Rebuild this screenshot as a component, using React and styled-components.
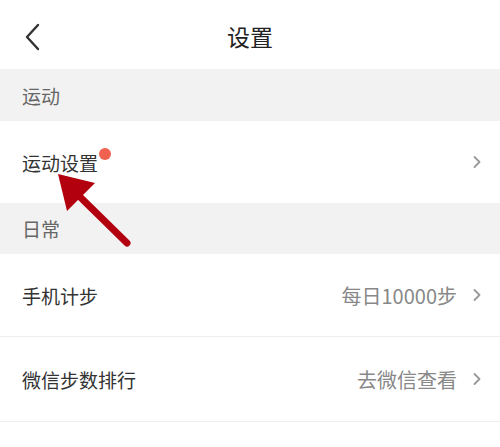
import React from "react";
import styled, { createGlobalStyle } from "styled-components";

const Global = createGlobalStyle`
  html, body { margin: 0; padding: 0; background: #fff; }
  body { font-family: "Noto Sans CJK SC", "Noto Sans", sans-serif; }
`;

const Page = styled.div`
  position: relative;
  width: 500px;
  height: 447px;
  background: #fff;
  overflow: hidden;
`;

const Header = styled.div`
  height: 69px;
  display: flex;
  align-items: center;
  justify-content: center;
  position: relative;
`;

const BackButton = styled.div`
  position: absolute;
  left: 22px;
  top: 21px;
  width: 24px;
  height: 32px;
  display: flex;
  align-items: center;
`;

const Title = styled.div`
  font-size: 23px;
  color: #222;
  line-height: 1;
  margin-top: 4px;
`;

const Section = styled.div`
  height: ${(p) => p.$h}px;
  background: #f2f2f2;
  display: flex;
  align-items: center;
  padding-left: 22px;
  font-size: 19px;
  color: #666;
  box-sizing: border-box;
`;

const Row = styled.div`
  height: ${(p) => p.$h}px;
  display: flex;
  align-items: center;
  padding: 0 19px 0 22px;
  box-sizing: border-box;
  border-bottom: ${(p) => (p.$line ? "1px solid #eeeeee" : "none")};
`;

const Label = styled.div`
  font-size: 19px;
  color: #333;
  position: relative;
  flex: 1;
  display: flex;
  align-items: center;
`;

const Dot = styled.span`
  display: inline-block;
  width: 12px;
  height: 12px;
  border-radius: 50%;
  background: #f0614f;
  margin-left: 1px;
  align-self: flex-start;
  margin-top: -1px;
`;

const Value = styled.div`
  font-size: 20px;
  color: #888;
  margin-right: 16px;
`;

const Chevron = () => (
  <svg width="8" height="14" viewBox="0 0 8 14">
    <path d="M1.5 2 L6.5 7 L1.5 12" fill="none" stroke="#999" strokeWidth="1.8" strokeLinecap="round" strokeLinejoin="round" />
  </svg>
);

const ArrowOverlay = styled.svg`
  position: absolute;
  left: 0;
  top: 0;
  pointer-events: none;
`;

export default function App() {
  return (
    <Page>
      <Global />
      <Header>
        <BackButton>
          <svg width="20" height="30" viewBox="0 0 20 30">
            <path d="M16 3 L5 15 L16 27" fill="none" stroke="#333" strokeWidth="2.4" strokeLinecap="round" strokeLinejoin="round" />
          </svg>
        </BackButton>
        <Title>设置</Title>
      </Header>
      <Section $h={52}>运动</Section>
      <Row $h={82}>
        <Label>
          运动设置
          <Dot />
        </Label>
        <Chevron />
      </Row>
      <Section $h={51}>日常</Section>
      <Row $h={83} $line>
        <Label>手机计步</Label>
        <Value>每日10000步</Value>
        <Chevron />
      </Row>
      <Row $h={85} $line>
        <Label>微信步数排行</Label>
        <Value>去微信查看</Value>
        <Chevron />
      </Row>
      <ArrowOverlay width="500" height="447" viewBox="0 0 500 447">
        <line x1="127" y1="243" x2="75" y2="192" stroke="#b3000e" strokeWidth="7" strokeLinecap="round" />
        <polygon points="58,174 95,183 67,211" fill="#b3000e" />
      </ArrowOverlay>
    </Page>
  );
}
